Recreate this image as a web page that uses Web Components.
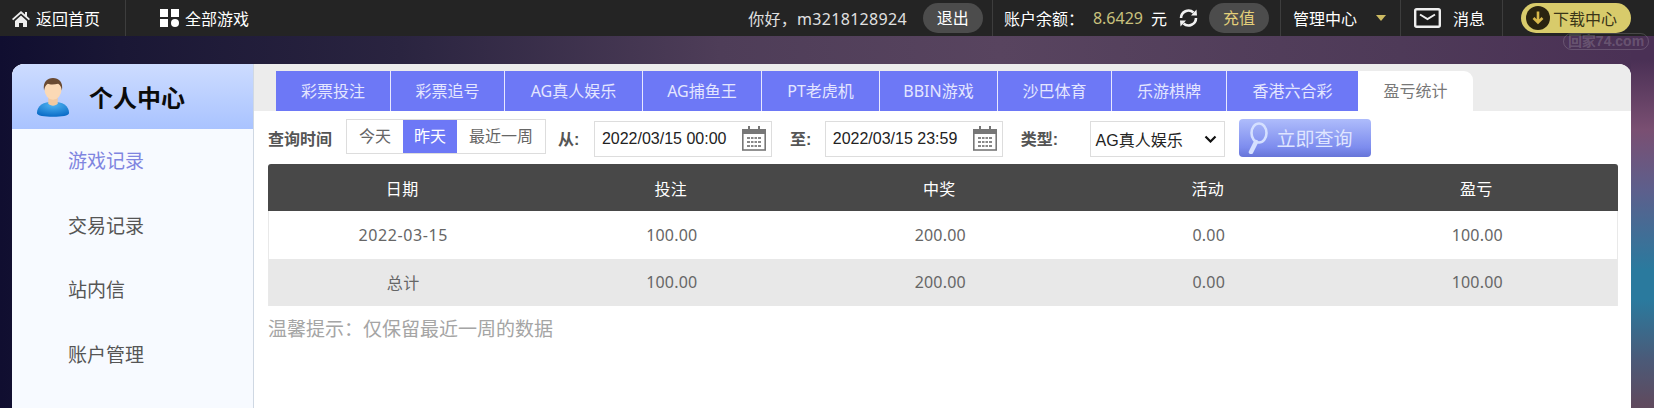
<!DOCTYPE html>
<html lang="zh">
<head>
<meta charset="utf-8">
<title>个人中心</title>
<style>
html, body { margin: 0; padding: 0; height: 408px; overflow: hidden; }
body {
    font-family: "Noto Sans", "Noto Sans CJK SC", sans-serif;
    background:
        linear-gradient(#4a3055 0, #4a3055 60px, #7a4f72 130px, #5d5f8c 190px, #2a7a9e 270px, #2a7a9e 300px, #4b5a78 360px, #5f4a5e 405px) 1631px 0 / 23px 408px no-repeat,
        linear-gradient(90deg, #100e30 0, #1a1735 120px, #2a2440 400px, #4e3d58 720px, #58445f 1000px, #4e3a58 1400px, #4a3055 100%);
}
</style>
</head>
<body>
<app-topbar></app-topbar>
<user-center></user-center>

<script>
const font = `"Noto Sans", "Noto Sans CJK SC", sans-serif`;
const inputFont = `"Liberation Sans", "Noto Sans CJK SC", sans-serif`;

class AppTopbar extends HTMLElement {
    constructor() {
        super();
        this.attachShadow({mode:'open'});
        this.shadowRoot.innerHTML = `
            <style>
                :host { display: flex; align-items: center; height: 36px; background: #242424; color: #fff; font: 16px ${font}; white-space: nowrap; position: relative; }
                .home { display: flex; align-items: center; gap: 6px; margin-left: 12px; width: 113px; }
                .sep { width: 1px; height: 36px; background: #3d3d3d; flex: none; }
                .games { display: flex; align-items: center; gap: 6px; margin-left: 34px; }
                .spacer { flex: 1; }
                .hello { color: #e0e0e0; letter-spacing: .3px; margin-right: 16px; }
                .pill { display: block; height: 30px; line-height: 30px; border-radius: 15px; background: #4c4c4c; text-align: center; width: 60px; }
                .logout { margin-right: 9px; }
                .bal { margin-left: 11px; margin-right: 9px; }
                .num { color: #c9c17d; margin-right: 8px; }
                .refresh { margin: 0 10px 0 11px; display: block; }
                .pay { color: #e3cf7a; margin-right: 11px; }
                .manage { margin-left: 12px; margin-right: 19px; }
                .caret { width: 0; height: 0; border: 5px solid transparent; border-top: 6px solid #cdbb62; border-bottom: 0; margin-right: 14px; }
                .msg { display: block; margin: 0 12px 0 13px; }
                .msgtxt { margin-right: 17px; }
                .down { display: flex; align-items: center; gap: 3px; height: 30px; width: 110px; box-sizing: border-box; padding-left: 5px; margin-left: 18px; margin-right: 23px; border-radius: 15px; background: #d8cb6b; color: #3a3518; }
                .mark { position: absolute; right: 5px; top: 33px; color: rgba(255,255,255,.18); border: 1px solid rgba(255,255,255,.16); border-radius: 9px; font: bold 14px ${inputFont}; width: 86px; height: 17px; line-height: 15px; box-sizing: border-box; overflow: hidden; text-align: center; }
            </style>
            <div class="home">
                <svg width="18" height="17" viewBox="0 0 18 17"><path fill="#eee" d="M9 1 0 9l1.2 1.3L9 3.6l7.8 6.7L18 9l-3-2.7V2h-2v2.6zM3 11v6h4v-4h4v4h4v-6L9 5.6z"/></svg>
                <span>返回首页</span>
            </div>
            <div class="sep"></div>
            <div class="games">
                <svg width="19" height="18" viewBox="0 0 19 18"><path fill="#fff" d="M0 0h8v8H0zM11 0h8v8h-8zM0 10h8v8H0z"/><circle cx="15" cy="14" r="4" fill="#fff"/></svg>
                <span>全部游戏</span>
            </div>
            <div class="spacer"></div>
            <span class="hello">你好，m3218128924</span>
            <span class="pill logout">退出</span>
            <div class="sep"></div>
            <span class="bal">账户余额：</span>
            <span class="num">8.6429</span><span>元</span>
            <svg class="refresh" width="21" height="20" viewBox="0 0 21 20"><path fill="none" stroke="#f2f2f2" stroke-width="2.6" d="M3 10a7.5 7.5 0 0 1 12.5-5.5M18 10a7.5 7.5 0 0 1-12.5 5.5"/><path fill="#f2f2f2" d="M13 7.5 19 7.5 18.5 1.5zM8 12.500 2 12.500 2.500 18.500z"/></svg>
            <span class="pill pay">充值</span>
            <div class="sep"></div>
            <span class="manage">管理中心</span>
            <span class="caret"></span>
            <div class="sep"></div>
            <svg class="msg" width="27" height="20" viewBox="0 0 27 20"><rect x="1.200" y="1.200" width="24.600" height="17.600" rx="1.500" fill="#1c1c1c" stroke="#eee" stroke-width="2.400"/><path d="M6 6.500 13.500 11 21 6.500" fill="none" stroke="#eee" stroke-width="2"/></svg>
            <span class="msgtxt">消息</span>
            <div class="sep"></div>
            <div class="down">
                <svg width="24" height="24" viewBox="0 0 24 24"><circle cx="12" cy="12" r="12" fill="#2a2410"/><path d="M12 5.500v11M7.500 12l4.500 4.500 4.500-4.500" fill="none" stroke="#d8b84a" stroke-width="2.600"/></svg>
                <span>下载中心</span>
            </div>
            <div class="mark">回家74.com</div>
        `;
    }
}
customElements.define("app-topbar", AppTopbar);

class SideMenu extends HTMLElement {
    constructor() {
        super();
        this.attachShadow({mode:'open'});
        this.shadowRoot.innerHTML = `
            <style>
                :host { display: block; width: 242px; flex: none; background: #f7faff; border-right: 1px solid #cfd8e3; box-sizing: border-box; }
                .head { display: flex; align-items: center; height: 65px; background: linear-gradient(#cddcff, #a9c3ff); box-sizing: border-box; padding-left: 24px; gap: 19px; }
                h1 { margin: 0; font: bold 24px ${font}; color: #0b0b0b; }
                ul { list-style: none; margin: 0; padding: 0 0 0 56px; font-size: 19px; color: #555; }
                li { height: 64.700px; line-height: 64px; }
                li.on { color: #7f85e0; }
            </style>
            <div class="head">
                <svg width="34" height="40" viewBox="0 0 36 42">
                    <defs><radialGradient id="b" cx=".5" cy=".2" r=".8"><stop offset="0" stop-color="#4fb4f2"/><stop offset="1" stop-color="#0a6bc6"/></radialGradient></defs>
                    <path d="M1 38c0-8 7-12 17-12s17 4 17 12c0 3-8 4-17 4S1 41 1 38z" fill="url(#b)"/>
                    <path d="M13 22h10v6c-2 3-8 3-10 0z" fill="#f2c9a0"/>
                    <ellipse cx="18" cy="13" rx="9" ry="11" fill="#fbd9b5"/>
                    <path d="M8.500 14C7 5 12 1 18 1s11 4 9.500 13c-1-4-2-6-4-7-4 1-9 1-11 0-2 1-3 3-4 7z" fill="#6a4a32"/>
                </svg>
                <h1>个人中心</h1>
            </div>
            <ul>
                <li class="on">游戏记录</li>
                <li>交易记录</li>
                <li>站内信</li>
                <li>账户管理</li>
            </ul>
        `;
    }
}
customElements.define("side-menu", SideMenu);

class TabBar extends HTMLElement {
    constructor() {
        super();
        this.attachShadow({mode:'open'});
        const tabs = [["彩票投注",115],["彩票追号",114],["AG真人娱乐",138],["AG捕鱼王",119],["PT老虎机",118],["BBIN游戏",118],["沙巴体育",114],["乐游棋牌",115],["香港六合彩",131]];
        this.shadowRoot.innerHTML = `
            <style>
                :host { display: flex; height: 47px; box-sizing: border-box; padding: 7px 0 0 22px; background: #ececec; font-size: 16px; }
                span { display: block; height: 40px; line-height: 41px; text-align: center; background: #6d78f6; color: #e4e6ff; border-right: 1px solid #e8e8ff; box-sizing: border-box; }
                span:first-child { border-radius: 9px 0 0 0; }
                span.off { border-right: 0; }
                span.on { background: #fff; color: #777; width: 115px; border: 0; border-radius: 0 9px 0 0; }
            </style>
            ${tabs.map((t,i) => `<span class="${i==8?'off':''}" style="width:${t[1]}px">${t[0]}</span>`).join("")}
            <span class="on">盈亏统计</span>
        `;
    }
}
customElements.define("tab-bar", TabBar);

class DateBox extends HTMLElement {
    constructor() {
        super();
        this.attachShadow({mode:'open'});
        this.shadowRoot.innerHTML = `
            <style>
                :host { display: flex; align-items: center; justify-content: space-between; width: 178px; height: 36px; margin-top: 2px; box-sizing: border-box; border: 1px solid #ddd; padding: 0 5px 0 7px; font: 16px ${inputFont}; color: #222; background: #fff; }
            </style>
            <slot></slot>
            <svg width="24" height="25" viewBox="0 0 24 25">
                <rect x=".8" y="4" width="22.400" height="20" fill="#fff" stroke="#777" stroke-width="1.600"/>
                <rect x="0" y="3" width="24" height="5" fill="#777"/>
                <path d="M6 0h2v6H6zM16 0h2v6h-2z" fill="#777"/>
                <path d="M5 11h14v2H5zM5 15h14v2H5zM5 19h14v2H5z" fill="#888"/>
                <path d="M8 10h1v12H8zM11.500 10h1v12h-1zM15 10h1v12h-1z" fill="#fff"/>
            </svg>
        `;
    }
}
customElements.define("date-box", DateBox);

class QueryBar extends HTMLElement {
    constructor() {
        super();
        this.attachShadow({mode:'open'});
        this.shadowRoot.innerHTML = `
            <style>
                :host { display: flex; align-items: center; height: 53px; padding: 0 0 0 14px; box-sizing: border-box; color: #555; font-size: 16px; white-space: nowrap; }
                b { font-weight: bold; color: #555; font-family: ${inputFont}; }
                .days { display: flex; height: 35px; margin: -2px 0 0 14px; border: 1px solid #ddd; box-sizing: border-box; }
                .days span { line-height: 33px; padding: 0 12px; color: #666; }
                .days span.on { background: #6d78f6; color: #fff; padding: 0 11px; }
                .from { margin: 0 14.500px 0 12px; }
                .to { margin: 0 13.500px 0 18px; }
                .kind { margin: 0 31.500px 0 18px; }
                .select { display: flex; align-items: center; justify-content: space-between; width: 135px; height: 36px; margin-top: 2px; box-sizing: border-box; border: 1px solid #ddd; padding: 0 7px 0 5px; color: #222; font-family: ${inputFont}; }
                .go { display: flex; align-items: center; gap: 9px; width: 132px; height: 38px; margin: 1px 0 0 14px; padding-left: 9px; box-sizing: border-box; border-radius: 4px; background: linear-gradient(#aebcfb, #7d8cee 75%, #6674d8); color: #dfe5ff; font-size: 19px; }
            </style>
            <b>查询时间</b>
            <div class="days"><span>今天</span><span class="on">昨天</span><span>最近一周</span></div>
            <b class="from">从:</b>
            <date-box>2022/03/15 00:00</date-box>
            <b class="to">至:</b>
            <date-box>2022/03/15 23:59</date-box>
            <b class="kind">类型:</b>
            <div class="select"><span>AG真人娱乐</span>
                <svg width="13" height="8" viewBox="0 0 13 8"><path d="M1.500 1.500 6.500 6.500 11.500 1.500" fill="none" stroke="#111" stroke-width="2.200"/></svg>
            </div>
            <div class="go">
                <svg width="20" height="32" viewBox="0 0 20 32"><ellipse cx="11" cy="11" rx="7.500" ry="9.500" fill="none" stroke="#d5e0ff" stroke-width="2.600"/><path d="M8 20 3 30" stroke="#d5e0ff" stroke-width="4.500" stroke-linecap="round"/></svg>
                <span>立即查询</span>
            </div>
        `;
    }
}
customElements.define("query-bar", QueryBar);

class StatTable extends HTMLElement {
    constructor() {
        super();
        this.attachShadow({mode:'open'});
        const heads = ["日期","投注","中奖","活动","盈亏"];
        const rows = [["2022-03-15","100.00","200.00","0.00","100.00"],["总计","100.00","200.00","0.00","100.00"]];
        const cells = r => r.map(c => `<span>${c}</span>`).join("");
        this.shadowRoot.innerHTML = `
            <style>
                :host { display: block; margin: 0 13px 0 14px; font-size: 16px; color: #666; }
                .row { display: grid; grid-template-columns: repeat(5, 268.500px); height: 47.330px; align-items: center; text-align: center; box-sizing: border-box; border: solid #e9e9e9; border-width: 0 1px; letter-spacing: .2px; }
                .row span:first-child { letter-spacing: .6px; }
                .head { background: #484848; color: #fff; border: 0; border-radius: 3px 3px 0 0; }
                .row.alt { background: #e8e8e8; }
            </style>
            <div class="row head">${cells(heads)}</div>
            <div class="row">${cells(rows[0])}</div>
            <div class="row alt">${cells(rows[1])}</div>
        `;
    }
}
customElements.define("stat-table", StatTable);

class UserCenter extends HTMLElement {
    constructor() {
        super();
        this.attachShadow({mode:'open'});
        this.shadowRoot.innerHTML = `
            <style>
                :host { display: flex; margin: 28px 23px 0 12px; height: 344px; background: #fff; border-radius: 12px 12px 0 0; overflow: hidden; }
                .main { flex: 1; min-width: 0; }
                .tip { margin: 8px 0 0 14px; font-size: 19px; color: #a5a5a5; }
            </style>
            <side-menu></side-menu>
            <div class="main">
                <tab-bar></tab-bar>
                <query-bar></query-bar>
                <stat-table></stat-table>
                <div class="tip">温馨提示：仅保留最近一周的数据</div>
            </div>
        `;
    }
}
customElements.define("user-center", UserCenter);
</script>
</body>
</html>
